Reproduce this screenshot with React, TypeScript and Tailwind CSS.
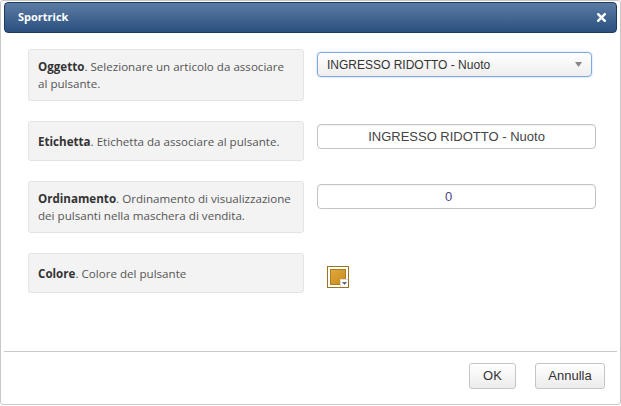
import React from "react";

const sans = { fontFamily: '"Open Sans", "Noto Sans", sans-serif' };
const arial = { fontFamily: '"Liberation Sans", Arial, sans-serif' };

function Row({ label, desc, children, top = "pt-[3px]" }: { label: string; desc: string; children: React.ReactNode; top?: string }) {
  return (
    <div className="flex">
      <div className="w-[276px] min-h-[40px] py-[8px] pl-[9px] pr-[8px] bg-[#f3f3f3] border border-[#e4e4e4] rounded-[3px] flex items-center text-[11.6px] leading-[17px] text-[#555]">
        <div>
          <span className="font-bold text-[#333]">{label}</span>. {desc}
        </div>
      </div>
      <div className={`ml-[13px] ${top}`}>{children}</div>
    </div>
  );
}

export default function App() {
  return (
    <div className="w-[621px] h-[406px] bg-white" style={sans}>
      <div className="w-[621px] h-[405px] border border-[#c8c8c8] rounded-[3px] pt-[1px] px-[3px] pb-[1px] flex flex-col">
        <div className="h-[31px] shrink-0 rounded-[4px] border border-[#1f3a5f] bg-gradient-to-b from-[#5b7ca3] to-[#2b5080] flex items-center justify-between pl-[13px] pr-[10px]">
          <span className="text-white font-bold text-[11px]">Sportrick</span>
          <svg width="9" height="9" viewBox="0 0 9 9">
            <path d="M1.2 1.2 L7.8 7.8 M7.8 1.2 L1.2 7.8" stroke="#fff" strokeWidth="2.4" strokeLinecap="square" />
          </svg>
        </div>
        <div className="flex-1 pt-[16px] pl-[24px] flex flex-col gap-[20px]">
          <Row label="Oggetto" desc="Selezionare un articolo da associare al pulsante.">
            <div
              className="w-[275px] h-[25px] border border-[#7fa8dd] rounded-[4px] bg-gradient-to-b from-white to-[#eeeeee] shadow-[0_0_2px_#a8c6ee] flex items-center justify-between pl-[9px] pr-[9px] text-[12px] text-[#333]"
              style={arial}
            >
              <span>INGRESSO RIDOTTO - Nuoto</span>
              <svg width="7" height="5" viewBox="0 0 7 5">
                <path d="M0 0 L7 0 L3.5 5 Z" fill="#888" />
              </svg>
            </div>
          </Row>
          <Row label="Etichetta" desc="Etichetta da associare al pulsante.">
            <div
              className="w-[279px] h-[25px] border border-[#c4c4c4] rounded-[4px] bg-white flex items-center justify-center text-[13px] text-[#444] shadow-[inset_0_1px_2px_rgba(0,0,0,0.06)]"
              style={arial}
            >
              INGRESSO RIDOTTO - Nuoto
            </div>
          </Row>
          <Row label="Ordinamento" desc="Ordinamento di visualizzazione dei pulsanti nella maschera di vendita.">
            <div
              className="w-[279px] h-[25px] border border-[#c4c4c4] rounded-[4px] bg-white flex items-center justify-center pr-[16px] text-[13px] text-[#4a4580] shadow-[inset_0_1px_2px_rgba(0,0,0,0.06)]"
              style={arial}
            >
              0
            </div>
          </Row>
          <Row label="Colore" desc="Colore del pulsante" top="pt-[13px] pl-[10px]">
            <div className="relative w-[22px] h-[22px] border border-[#9a7420] bg-white p-[2px]">
              <div className="w-full h-full bg-gradient-to-br from-[#e0a83a] to-[#c88a1c] border border-[#b07d1e]" />
              <div className="absolute right-0 bottom-0 w-[8px] h-[8px] bg-white border-l border-t border-[#ddd] flex items-center justify-center">
                <svg width="5" height="3" viewBox="0 0 5 3">
                  <path d="M0 0 L5 0 L2.5 3 Z" fill="#666" />
                </svg>
              </div>
            </div>
          </Row>
        </div>
        <div className="h-[52px] shrink-0 border-t border-[#c8c8c8] flex items-start justify-end gap-[19px] pt-[11px] pr-[12px]">
          <button className="w-[47px] h-[26px] border border-[#c5c5c5] rounded-[3px] bg-gradient-to-b from-white to-[#ececec] text-[13px] text-[#333]" style={arial}>
            OK
          </button>
          <button className="w-[70px] h-[26px] border border-[#c5c5c5] rounded-[3px] bg-gradient-to-b from-white to-[#ececec] text-[13px] text-[#333]" style={arial}>
            Annulla
          </button>
        </div>
      </div>
    </div>
  );
}
